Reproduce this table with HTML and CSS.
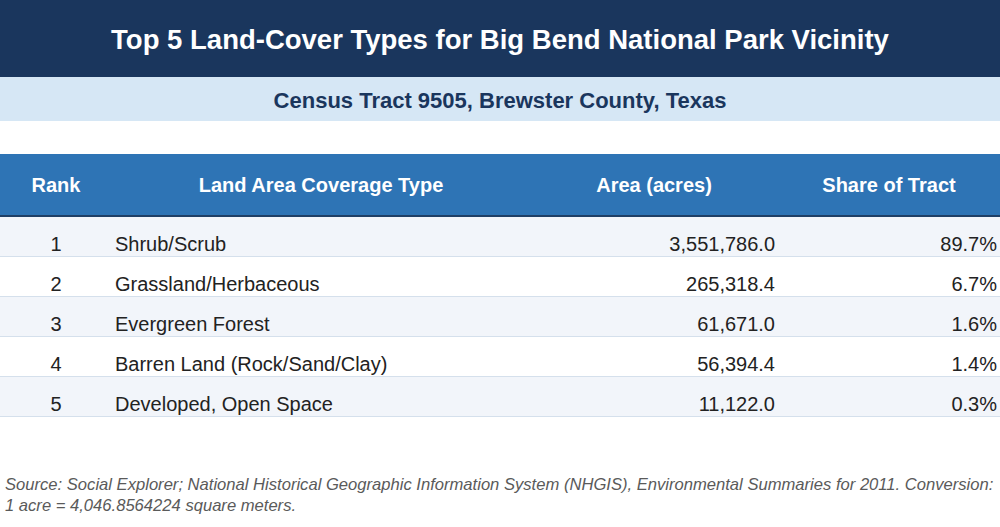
FILE: index.html
```html
<!DOCTYPE html>
<html lang="en">
<head>
<meta charset="utf-8">
<title>Top 5 Land-Cover Types</title>
<link rel="stylesheet" href="styles.css">
</head>
<body>
<div class="page">
  <header class="title-band"><h1>Top 5 Land-Cover Types for Big Bend National Park Vicinity</h1></header>
  <div class="subtitle-band"><h2>Census Tract 9505, Brewster County, Texas</h2></div>
  <table class="data">
    <colgroup>
      <col class="c-rank"><col class="c-type"><col class="c-area"><col class="c-share">
    </colgroup>
    <thead>
      <tr><th>Rank</th><th>Land Area Coverage Type</th><th>Area (acres)</th><th>Share of Tract</th></tr>
    </thead>
    <tbody>
      <tr><td class="rank">1</td><td class="type">Shrub/Scrub</td><td class="num">3,551,786.0</td><td class="num">89.7%</td></tr>
      <tr><td class="rank">2</td><td class="type">Grassland/Herbaceous</td><td class="num">265,318.4</td><td class="num">6.7%</td></tr>
      <tr><td class="rank">3</td><td class="type">Evergreen Forest</td><td class="num">61,671.0</td><td class="num">1.6%</td></tr>
      <tr><td class="rank">4</td><td class="type">Barren Land (Rock/Sand/Clay)</td><td class="num">56,394.4</td><td class="num">1.4%</td></tr>
      <tr><td class="rank">5</td><td class="type">Developed, Open Space</td><td class="num">11,122.0</td><td class="num">0.3%</td></tr>
    </tbody>
  </table>
  <p class="source">Source: Social Explorer; National Historical Geographic Information System (NHGIS), Environmental Summaries for 2011. Conversion: 1 acre = 4,046.8564224 square meters.</p>
</div>
</body>
</html>
```

FILE: styles.css
```css
html, body {
  margin: 0;
  padding: 0;
  background: #ffffff;
}
body {
  font-family: "Liberation Sans", Arial, Helvetica, sans-serif;
  color: #222222;
}
.page {
  width: 1000px;
  height: 527px;
  overflow: hidden;
}
.title-band {
  background: #1a365d;
  height: 77px;
  display: flex;
  align-items: center;
  justify-content: center;
}
.title-band h1 {
  margin: 0;
  color: #ffffff;
  font-size: 27.5px;
  font-weight: bold;
  padding-top: 2px;
}
.subtitle-band {
  background: #d6e7f5;
  height: 44px;
  display: flex;
  align-items: center;
  justify-content: center;
  margin-bottom: 33px;
}
.subtitle-band h2 {
  margin: 0;
  color: #1a365d;
  font-size: 22px;
  font-weight: bold;
  padding-top: 3px;
}
.data {
  width: 1000px;
  border-collapse: collapse;
  table-layout: fixed;
}
.c-rank { width: 112px; }
.c-type { width: 418px; }
.c-area { width: 248px; }
.c-share { width: 222px; }
.data thead th {
  background: #2e74b5;
  color: #ffffff;
  font-size: 20px;
  font-weight: bold;
  height: 59px;
  padding: 2px 3px 0 3px;
  text-align: center;
  border-bottom: 2px solid #1f3f66;
}
.data tbody td {
  height: 24px;
  line-height: 23px;
  padding: 15px 3px 0 3px;
  font-size: 20px;
  color: #222222;
  border-bottom: 1px solid #d5e0ec;
}
.data tbody tr:nth-child(odd) td {
  background: #f2f5fa;
}
.data tbody tr:nth-child(even) td {
  background: #ffffff;
}
.data td.rank { text-align: center; }
.data td.type { text-align: left; }
.data td.num { text-align: right; }
.source {
  margin: 57px 0 0 0;
  padding: 0 2px 0 5px;
  font-size: 16.6px;
  line-height: 21px;
  font-style: italic;
  color: #5a5a5a;
}
```
